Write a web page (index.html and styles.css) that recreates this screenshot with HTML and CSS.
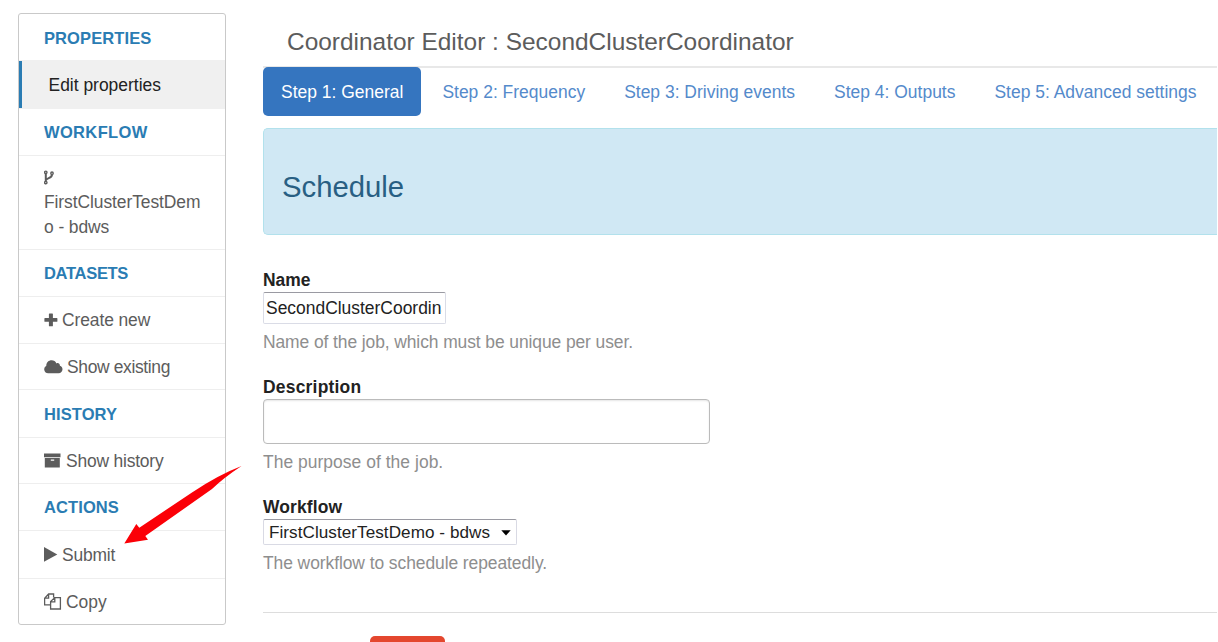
FILE: index.html
```html
<!DOCTYPE html>
<html lang="en">
<head>
<meta charset="utf-8">
<title>Coordinator Editor</title>
<link rel="stylesheet" href="styles.css">
</head>
<body>
<div class="page">
  <nav class="sidebar">
    <div class="head props">PROPERTIES</div>
    <div class="item active">Edit properties</div>
    <div class="head flow">WORKFLOW</div>
    <div class="item tall">
      <svg class="fork" width="11" height="15" viewBox="0 0 11 15" fill="none" stroke="#5c5c5c" stroke-width="1.4"><circle cx="1.800" cy="2.300" r="1.2"/><circle cx="1.800" cy="12.600" r="1.2"/><circle cx="8" cy="3.200" r="1.2"/><path d="M1.800 3.500v7.800M8 4.400c0 4-5 3.200-5.900 5.600" stroke-width="2"/></svg>
      <div>FirstClusterTestDem<br>o - bdws</div>
    </div>
    <div class="head data">DATASETS</div>
    <div class="item create"><svg width="14" height="14" viewBox="0 0 14 14"><path d="M5.500.5h2.800q.6 0 .6.600v3.900h3.900q.6 0 .6.600v2.600q0 .6-.6.600H8.900v3.900q0 .6-.6.600H5.500q-.6 0-.6-.6V8.800H1q-.6 0-.6-.6V5.600Q.4 5 1 5h3.900V1.100q0-.6.600-.6z" fill="#5c5c5c"/></svg><span>Create new</span></div>
    <div class="item existing"><svg width="19" height="14" viewBox="0 0 19 14"><path d="M4.100 13.300a4 4 0 0 1-1.800-7.500C2.200 2.600 4.600.3 7.600.3c2.200 0 4 1.200 4.800 3.100 1.700-1 3.700.2 3.500 2.300 1.500.4 2.600 1.900 2.600 3.600 0 2.200-1.700 4-3.900 4z" fill="#5c5c5c"/></svg><span>Show existing</span></div>
    <div class="head">HISTORY</div>
    <div class="item"><svg width="18" height="15" viewBox="0 0 18 15"><path fill-rule="evenodd" d="M0 .5h16.500v3.800H0zM.8 5h15v9.500h-15zM6.800 6.500v1.200h3.400V6.500z" fill="#5c5c5c"/></svg><span>Show history</span></div>
    <div class="head">ACTIONS</div>
    <div class="item"><svg width="14" height="15" viewBox="0 0 14 15"><path d="M0 .1 13.300 7.400 0 14.700z" fill="#5c5c5c"/></svg><span>Submit</span></div>
    <div class="item copy"><svg width="18" height="17" viewBox="0 0 18 17" fill="none" stroke="#5c5c5c" stroke-width="1.300"><path d="M6.200 11.900H.6V5.200L4.600 1h5v3.500M4.600 1v4.200h-4M6.600 16V8.600l4.200-4h5.600V16zM10.800 4.600v4.200H6.600"/></svg><span>Copy</span></div>
  </nav>
  <main class="main">
    <h1 class="title">Coordinator Editor : SecondClusterCoordinator</h1>
    <div class="tabs">
      <a class="tab on">Step 1: General</a><a class="tab">Step 2: Frequency</a><a class="tab">Step 3: Driving events</a><a class="tab">Step 4: Outputs</a><a class="tab">Step 5: Advanced settings</a>
    </div>
    <section class="banner">Schedule</section>
    <form class="form">
      <div class="field">
        <label>Name</label>
        <input class="name" value="SecondClusterCoordinator">
        <p class="help h-name">Name of the job, which must be unique per user.</p>
      </div>
      <div class="field">
        <label class="l-desc">Description</label>
        <input class="desc">
        <p class="help h-desc">The purpose of the job.</p>
      </div>
      <div class="field">
        <label class="l-flow">Workflow</label>
        <div class="select"><span>FirstClusterTestDemo - bdws</span><svg width="10" height="6" viewBox="0 0 10 6"><path d="M.3.300h9.400L5 5.400z"/></svg></div>
        <p class="help h-flow">The workflow to schedule repeatedly.</p>
      </div>
      <div class="actions"><div class="button"></div></div>
    </form>
  </main>
  <svg class="pointer" width="122" height="84" viewBox="122 463 122 84"><path d="M124.300 543.500 136.300 524l3 3.700L192 492.500Q218 475 241.500 466 224 477.500 212 489L145.300 536l2.700 3.700z" fill="#fb0007"/></svg>
</div>
</body>
</html>
```
FILE: styles.css
```css
* { box-sizing: border-box; }
body {
  margin: 0;
  background: #fff;
  font: 17.45px/24px "Liberation Sans", Arial, sans-serif;
  color: #5c5c5c;
}
.page {
  position: relative;
  width: 1218px;
  height: 642px;
  overflow: hidden;
  display: flex;
  align-items: flex-start;
  gap: 37px;
  padding: 13px 1px 0 18px;
}
.sidebar {
  flex: 0 0 208px;
  height: 612px;
  border: 1px solid #c9c9c9;
  border-radius: 3px;
  display: grid;
  grid-template-rows: 46px 49px 47px 94px 47px 47px 46px 48px 46px 47px 48px 45px;
}
.head, .item {
  display: flex;
  align-items: center;
  padding-left: 25px;
  border-bottom: 1px solid #eee;
  white-space: nowrap;
}
.head { color: #2a7cb3; font-weight: bold; font-size: 16.5px; letter-spacing: .1px; }
.props { border: 0; padding-top: 1px; }
.data { letter-spacing: -.3px; }
.flow { letter-spacing: .35px; }
.item { gap: 4px; letter-spacing: -.2px; }
.create { letter-spacing: -.1px; }
.existing { letter-spacing: -.35px; }
.copy { letter-spacing: 0; }
.item:last-child { border: 0; }
.active {
  background: #f0f0f0;
  border: 0;
  color: #222;
  position: relative;
  padding-left: 29.5px;
  letter-spacing: 0;
}
.active::before {
  content: "";
  position: absolute;
  left: 0;
  top: 1px;
  bottom: 1px;
  width: 3px;
  background: #2a7cb3;
}
.tall {
  flex-direction: column;
  align-items: flex-start;
  justify-content: flex-start;
  gap: 5px;
  padding-top: 14px;
  line-height: 24.5px;
  letter-spacing: -.08px;
}
.main { flex: 1; min-width: 0; }
.title {
  margin: 0;
  height: 55px;
  padding: 14px 0 0 24px;
  border-bottom: 2px solid #e8e8e8;
  font-size: 24.45px;
  line-height: 30px;
  font-weight: normal;
}
.tabs { display: flex; gap: 3px; margin-top: -1px; height: 49px; }
.tab {
  padding: 1px 18px 0;
  line-height: 49px;
  height: 49px;
  color: #548acb;
  border-radius: 5px;
  white-space: nowrap;
  letter-spacing: .015px;
}
.tab.on { background: #3575bf; color: #fff; }
.banner {
  margin-top: 12px;
  height: 107px;
  padding: 11px 0 0 18px;
  display: flex;
  align-items: center;
  border: 1px solid #b2e1ec;
  border-right: 0;
  border-radius: 5px 0 0 5px;
  background: #d0e8f4;
  color: #285f83;
  font-size: 29.3px;
}
.form { margin-top: 33px; }
.field { margin-bottom: 21px; }
label { display: block; height: 24px; color: #222; font-weight: bold; }
.l-desc { letter-spacing: .22px; }
.l-flow { letter-spacing: .12px; }
input {
  display: block;
  font: inherit;
  color: #222;
  background: #fff;
  outline: 0;
}
.name {
  width: 183px;
  height: 32px;
  padding: 0 3px 0 2px;
  border: 1px solid #dadce6;
  border-top-color: #9a9aa2;
  border-radius: 2px;
}
.desc {
  width: 447px;
  height: 45px;
  border: 1px solid #bbb;
  border-radius: 4px;
  box-shadow: inset 0 1px 2px rgba(0, 0, 0, .1);
}
.help { margin: 6px 0 0; color: #8e8e8e; white-space: nowrap; }
.select {
  width: 254px;
  height: 26px;
  display: flex;
  align-items: center;
  justify-content: space-between;
  padding: 1px 5px 0;
  border: 1px solid #d9dae4;
  border-top-color: #9a9aa2;
  border-radius: 2px;
  color: #222;
  font-size: 17.1px;
  letter-spacing: .06px;
}
.select svg { fill: #000; }
.h-name { letter-spacing: -.09px; }
.h-desc { letter-spacing: .04px; }
.h-flow { letter-spacing: -.07px; }
.actions { margin-top: 37px; padding: 23px 0 0 107px; border-top: 1px solid #ddd; }
.button { width: 75px; height: 40px; border-radius: 5px; background: #e4472e; }
.pointer { position: absolute; left: 122px; top: 463px; }
```
